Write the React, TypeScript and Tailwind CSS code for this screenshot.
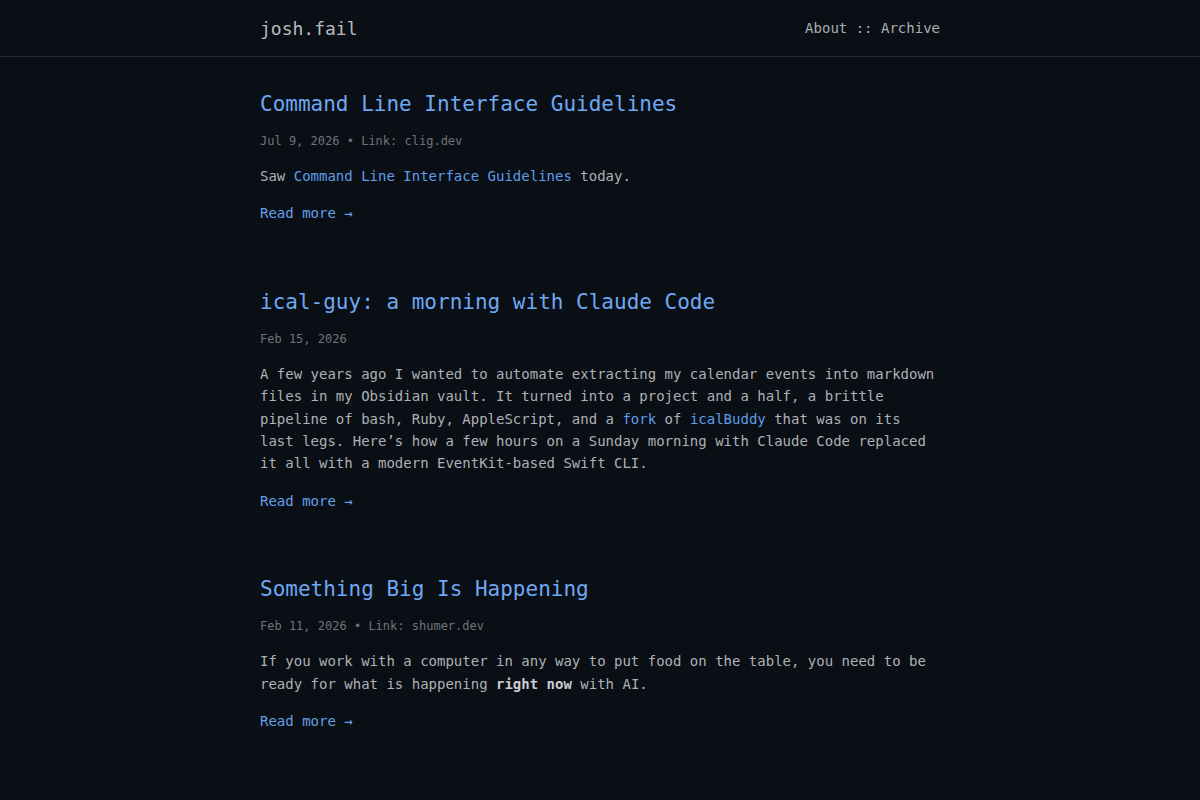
import type { ReactNode } from 'react';

interface Post {
  title: string;
  date: string;
  link?: string;
  body: ReactNode;
}

const mono = "font-['DejaVu_Sans_Mono','Liberation_Mono',monospace]";

const posts: Post[] = [
  {
    title: 'Command Line Interface Guidelines',
    date: 'Jul 9, 2026',
    link: 'clig.dev',
    body: (
      <>
        Saw <a className="text-[#5f9de8]">Command Line Interface Guidelines</a> today.
      </>
    ),
  },
  {
    title: 'ical-guy: a morning with Claude Code',
    date: 'Feb 15, 2026',
    body: (
      <>
        A few years ago I wanted to automate extracting my calendar events into markdown
        files in my Obsidian vault. It turned into a project and a half, a brittle pipeline
        of bash, Ruby, AppleScript, and a <a className="text-[#5f9de8]">fork</a> of{' '}
        <a className="text-[#5f9de8]">icalBuddy</a> that was on its last legs. Here’s how a
        few hours on a Sunday morning with Claude Code replaced it all with a modern
        EventKit-based Swift CLI.
      </>
    ),
  },
  {
    title: 'Something Big Is Happening',
    date: 'Feb 11, 2026',
    link: 'shumer.dev',
    body: (
      <>
        If you work with a computer in any way to put food on the table, you need to be
        ready for what is happening <strong className="font-bold text-[#c9ccd1]">right now</strong>{' '}
        with AI.
      </>
    ),
  },
];

function PostSummary({ post }: { post: Post }) {
  return (
    <article className="flex flex-col gap-[15px]">
      <h2 className="-mb-px text-[21px] leading-[27px] text-[#6ea8f2]">{post.title}</h2>
      <div className="text-[12px] leading-[18px] text-[#6f747c]">
        {post.date}
        {post.link && <> • Link: {post.link}</>}
      </div>
      <p className="text-[14px] leading-[22.4px] text-[#aeb1b6]">{post.body}</p>
      <a className="text-[14px] leading-[22.4px] text-[#64a0e8]">Read more →</a>
    </article>
  );
}

export default function App() {
  return (
    <div className={`min-h-screen bg-[#0a0e15] ${mono}`}>
      <header className="border-b border-[#232a33]">
        <div className="mx-auto flex h-14 w-[680px] items-center justify-between">
          <a className="text-[18px] text-[#b9bcc0]">josh.fail</a>
          <nav className="text-[14px] text-[#aaadb2]">
            <a>About</a> :: <a>Archive</a>
          </nav>
        </div>
      </header>
      <main className="mx-auto flex w-[680px] flex-col gap-16 pt-[34px] pb-16">
        {posts.map((post) => (
          <PostSummary key={post.title} post={post} />
        ))}
      </main>
    </div>
  );
}
